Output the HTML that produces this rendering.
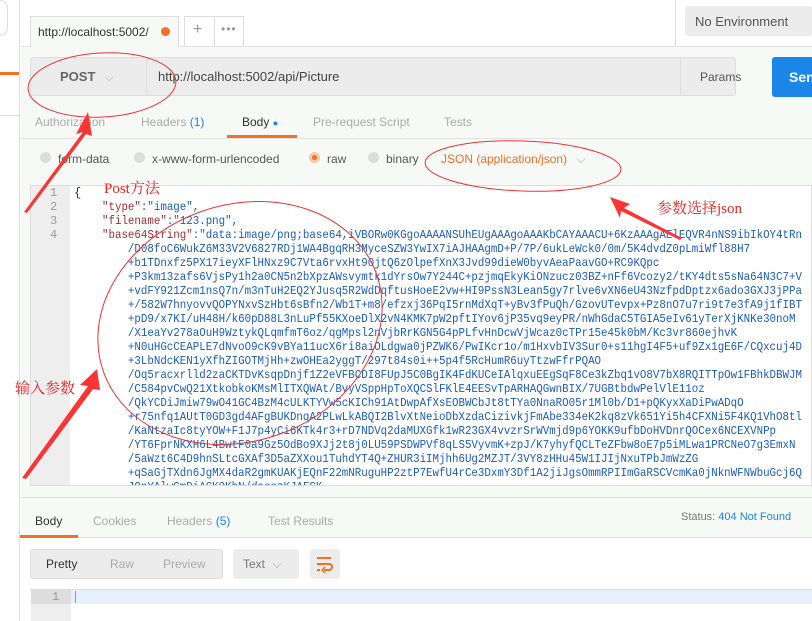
<!DOCTYPE html>
<html><head><meta charset="utf-8"><style>
*{margin:0;padding:0;box-sizing:border-box}
body{width:812px;height:621px;overflow:hidden;background:#fff;font-family:"Liberation Sans",sans-serif;position:relative;font-size:12px;color:#505050}
.a{position:absolute}
.code{font-family:"Liberation Mono",monospace;font-size:12px;color:#1a5dbd;white-space:pre;line-height:14px}
.sq{transform:scaleX(0.9);transform-origin:0 0}
.tab{position:absolute;top:115px;font-size:12px;color:#aaa}
.radio{position:absolute;top:152px;width:11px;height:11px;border-radius:50%;background:#ddd}
.cn{font-family:"Liberation Serif","Noto Serif CJK SC",serif;color:#e22;font-size:15px}
</style></head><body>
<!-- sidebar -->
<div class="a" style="left:0;top:0;width:20px;height:621px;background:#fff;border-right:1px solid #ddd"></div>
<div class="a" style="left:0;top:0;width:8px;height:36px;border:1px solid #ddd;border-left:none;border-radius:0 18px 18px 0"></div>
<div class="a" style="left:0;top:72px;width:19px;height:3px;background:#f47023"></div>
<div class="a" style="left:0;top:115px;width:19px;height:1px;background:#ddd"></div>
<!-- main bg -->
<div class="a" style="left:21px;top:46px;width:791px;height:451px;background:#f7f9f7;border-top:1px solid #e2e2e2"></div>
<!-- tabs top -->
<div class="a" style="left:30px;top:16px;width:149px;height:31px;background:#f7f9f7;border:1px solid #ddd;border-bottom:none"></div>
<div class="a" style="left:38px;top:25px;font-size:12px;color:#333">http://localhost:5002/</div>
<div class="a" style="left:161px;top:27px;width:9px;height:9px;border-radius:50%;background:#f47023"></div>
<div class="a" style="left:184px;top:16px;width:60px;height:30px;border:1px solid #ddd;border-bottom:none"></div>
<div class="a" style="left:214px;top:16px;width:1px;height:30px;background:#ddd"></div>
<div class="a" style="left:193px;top:21px;font-size:16px;color:#999">+</div>
<div class="a" style="left:221px;top:22px;font-size:12px;color:#999;letter-spacing:1px">•••</div>
<div class="a" style="left:675px;top:0;width:1px;height:46px;background:#ddd"></div>
<div class="a" style="left:685px;top:6px;width:127px;height:30px;background:#ececec;border-radius:3px"></div>
<div class="a" style="left:695px;top:14px;font-size:13px;color:#555">No Environment</div>
<!-- request row -->
<div class="a" style="left:30px;top:57px;width:706px;height:39px;background:#ececec;border:1px solid #ddd;border-radius:3px"></div>
<div class="a" style="left:146px;top:57px;width:1px;height:39px;background:#ddd"></div>
<div class="a" style="left:680px;top:57px;width:1px;height:39px;background:#ddd"></div>
<div class="a" style="left:60px;top:69px;font-size:13px;font-weight:bold;color:#666">POST <span style="font-weight:normal;color:#aaa;font-size:11px;margin-left:6px">⌵</span></div>
<div class="a" style="left:158px;top:69px;font-size:13px;color:#444">http://localhost:5002/api/Picture</div>
<div class="a" style="left:700px;top:70px;font-size:12px;color:#555">Params</div>
<div class="a" style="left:772px;top:57px;width:40px;height:40px;background:#1a87e8;border-radius:3px 0 0 3px"></div>
<div class="a" style="left:789px;top:69px;font-size:14px;font-weight:bold;color:#fff">Sen</div>
<!-- tabs -->
<div class="tab" style="left:35px">Authorization</div>
<div class="tab" style="left:141px">Headers <span style="color:#1a87e8">(1)</span></div>
<div class="tab" style="left:242px;color:#333">Body <span style="color:#1a87e8;font-size:9px">●</span></div>
<div class="tab" style="left:313px">Pre-request Script</div>
<div class="tab" style="left:444px">Tests</div>
<div class="a" style="left:227px;top:135px;width:70px;height:3px;background:#f47023"></div>
<div class="a" style="left:21px;top:138px;width:791px;height:1px;background:#e2e2e2"></div>
<!-- radios -->
<div class="radio" style="left:40px"></div><div class="a" style="left:58px;top:152px;color:#555">form-data</div>
<div class="radio" style="left:134px"></div><div class="a" style="left:152px;top:152px;color:#555">x-www-form-urlencoded</div>
<div class="radio" style="left:309px;background:#f47023;border:3px solid #f5c9b0"></div><div class="a" style="left:327px;top:152px;color:#555">raw</div>
<div class="radio" style="left:368px"></div><div class="a" style="left:386px;top:152px;color:#555">binary</div>
<div class="a" style="left:441px;top:152px;color:#f47023">JSON (application/json) <span style="color:#aaa;margin-left:6px">⌵</span></div>
<!-- editor -->
<div class="a" style="left:30px;top:185px;width:782px;height:301px;background:#fff;border:1px solid #ddd"></div>
<div class="a" style="left:31px;top:186px;width:39px;height:299px;background:#eee"></div>
<div class="a code" style="left:50px;top:186px;color:#999">1
2
3
4</div>
<div class="a code" style="left:74px;top:186px;color:#333">{</div>
<div class="a" style="left:102px;top:200px;overflow:hidden;width:710px;height:285px"><div class="code sq"><span style="color:#a03030">"type"</span>:<span>"image"</span>,
<span style="color:#a03030">"filename"</span>:<span>"123.png"</span>,
<span style="color:#a03030">"base64String"</span>:"data:image/png;base64,iVBORw0KGgoAAAANSUhEUgAAAgoAAAKbCAYAAACU+6KzAAAgAElEQVR4nNS9ibIkOY4tRn
    /D08foC6WukZ6M33V2V6827RDj1WA4BgqRH3MyceSZW3YwIX7iAJHAAgmD+P/7P/6ukLeWck0/0m/5K4dvdZ0pLmiWfl88H7
    +b1TDnxfz5PX17ieyXFlHNxz9C7Vta6rvxHt90jtQ6zOlpefXnX3Jvd99dieW0byvAeaPaavGO+RC9KQpc
    +P3km13zafs6VjsPy1h2a0CN5n2bXpzAWsvymtk1dYrsOw7Y244C+pzjmqEkyKiONzucz03BZ+nFf6Vcozy2/tKY4dts5sNa64N3C7+V
    +vdFY921Zcm1nsQ7n/m3nTuH2EQ2YJusq5R2WdDqftusHoeE2vw+HI9PssN3Lean5gy7rlve6vXN6eU43NzfpdDptzx6ado3GXJ3jPPa
    +/582W7hnyovvQOPYNxvSzHbt6sBfn2/Wb1T+m8/efzxj36PqI5rnMdXqT+yBv3fPuQh/GzovUTevpx+Pz8nO7u7ri9t7e3fA9j1fIBT
    +pD9/x7KI/uH48H/k60pD88L3nLuPf55KXoeDlX2vN4KMK7pW2pftIYov6jP35vq9eyPR/nWhGdaC5TGIA5eIv61yTerXjKNKe30noM
    /X1eaYv278aOuH9WztykQLqmfmT6oz/qgMpsl2nVjbRrKGN5G4pPLfvHnDcwVjWcaz0cTPr15e45k0bM/Kc3vr860ejhvK
    +N0uHGcCEAPLE7dNvoO9cK9vBYa11ucX6ri8aiOLdgwa0jPZWK6/PwIKcr1o/m1HxvbIV3Sur0+s11hgI4F5+uf9Zx1gE6F/CQxcuj4D
    +3LbNdcKEN1yXfhZIGOTMjHh+zwOHEa2yggT/297t84s0i++5p4f5RcHumR6uyTtzwFfrPQAO
    /Oq5racxrlld2zaCKTDvKsqpDnjf1Z2eVFBCDI8FUpJ5C0BgIK4FdKUCeIAlqxuEEgSqF8Ce3kZbq1vO8V7bX8RQITTpOw1FBhkDBWJM
    /C584pvCwQ21XtkobkoKMsMlITXQWAt/BvyVSppHpToXQCSlFKlE4EESvTpARHAQGwnBIX/7UGBtbdwPelVlE11oz
    /QkYCDiJmiw79wO41GC4BzM4cULKTYVw5cKICh91AtDwpAfXsEOBWCbJt8tTYa0NnaRO05r1Ml0b/D1+pQKyxXaDiPwADqO
    +r75nfq1AUtT0GD3gd4AFgBUKDnqA2PLwLkABQI2BlvXtNeioDbXzdaCizivkjFmAbe334eK2kq8zVk651Yi5h4CFXNi5F4KQ1VhO8tl
    /KaNtzaIc8tyYOW+F1J7p4yCi6KTk4r3+rD7NDVq2daMUXGfk1wR23GX4vvzrSrWVmjd9p6YOKK9ufbDoHVDnrQOCex6NCEXVNPp
    /YT6FprNKXH6L4BwtF0a9Gz5OdBo9XJj2t8j0LU59PSDWPVf8qLS5VyvmK+zpJ/K7yhyfQCLTeZFbw8oE7p5iMLwa1PRCNeO7g3EmxN
    /5aWzt6C4D9hnSLtcGXAf3D5aZXXou1TuhdYT4Q+ZHUR3iIMjhh6Ug2MZJT/3VY8zHHu45W1IJIjNxuTPbJmWzZG
    +qSaGjTXdn6JgMX4daR2gmKUAKjEQnF22mNRuguHP2ztP7EwfU4rCe3DxmY3Df1A2jiJgsOmmRPIImGaRSCVcmKa0jNknWFNWbuGcj6Q
    J9nYAlwGmDiAGK0KbN/daoozKJAFCK</div></div>
<!-- response -->
<div class="a" style="left:21px;top:497px;width:791px;height:41px;background:#f7f9f7;border-top:1px solid #ddd;border-bottom:1px solid #e2e2e2"></div>
<div class="a" style="left:35px;top:514px;color:#333">Body</div>
<div class="a" style="left:93px;top:514px;color:#aaa">Cookies</div>
<div class="a" style="left:167px;top:514px;color:#aaa">Headers <span style="color:#1a87e8">(5)</span></div>
<div class="a" style="left:268px;top:514px;color:#aaa">Test Results</div>
<div class="a" style="left:20px;top:535px;width:58px;height:3px;background:#f47023"></div>
<div class="a" style="left:681px;top:511px;font-size:11px;color:#777">Status: <span style="color:#1a87e8">404 Not Found</span></div>
<div class="a" style="left:30px;top:549px;width:193px;height:30px;background:#ececec;border:1px solid #ddd;border-radius:3px"></div>
<div class="a" style="left:46px;top:557px;color:#333">Pretty</div>
<div class="a" style="left:110px;top:557px;color:#aaa">Raw</div>
<div class="a" style="left:163px;top:557px;color:#aaa">Preview</div>
<div class="a" style="left:233px;top:549px;width:66px;height:30px;background:#ececec;border-radius:3px"></div>
<div class="a" style="left:243px;top:557px;color:#777">Text <span style="color:#aaa;margin-left:4px">⌵</span></div>
<div class="a" style="left:310px;top:549px;width:30px;height:30px;background:#ececec;border-radius:3px"></div>
<svg class="a" style="left:314px;top:553px" width="22" height="22"><path d="M3 5h14M3 11h12a3 3 0 0 1 0 6h-5M3 17h3" stroke="#f47023" stroke-width="2" fill="none"/><path d="M11 14l-3 3 3 3" stroke="#f47023" stroke-width="1.5" fill="none"/></svg>
<div class="a" style="left:30px;top:589px;width:782px;height:32px;background:#fff;border-top:1px solid #ddd"></div>
<div class="a" style="left:31px;top:590px;width:40px;height:31px;background:#eee"></div>
<div class="a" style="left:71px;top:590px;width:741px;height:14px;background:#e5f0fb"></div>
<div class="a" style="left:31px;top:590px;width:40px;height:14px;background:#ddd"></div>
<div class="a code" style="left:52px;top:590px;color:#999">1</div>
<div class="a" style="left:75px;top:591px;width:1px;height:12px;background:#999"></div>
<!-- annotations -->
<svg class="a" style="left:0;top:0" width="812" height="621">
<g fill="none" stroke="#e33" stroke-width="1">
<ellipse cx="102" cy="85" rx="74" ry="32" transform="rotate(-3 102 85)"/>
<ellipse cx="523" cy="166" rx="98" ry="25" transform="rotate(2 523 166)"/>
<ellipse cx="240" cy="323" rx="145" ry="118" transform="rotate(-20 240 323)"/>
</g>
<g fill="#f33">
<polygon points="88,112 76,134 83,132 24,212 27,213 86,134 92,136"/>
<polygon points="97,369 80,385 88,386 22,478 26,479 93,389 100,390"/>
<polygon points="610,197 630,204 624,208 682,238 680,240 621,211 620,218"/>
</g>
</svg>
<div class="a cn" style="left:104px;top:177px">Post方法</div>
<div class="a cn" style="left:657px;top:197px">参数选择json</div>
<div class="a cn" style="left:15px;top:377px">输入参数</div>
</body></html>
